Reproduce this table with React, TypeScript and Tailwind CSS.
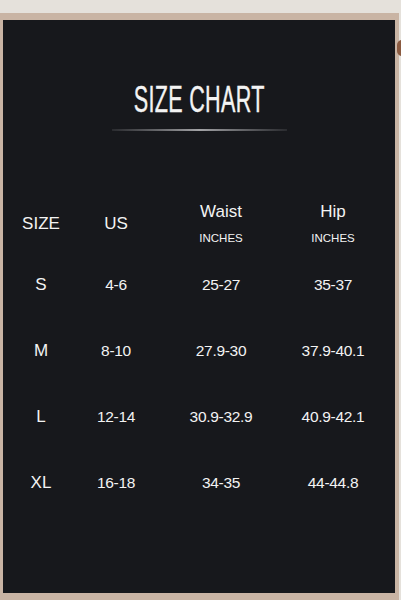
const rows = [
  ["S", "4-6", "25-27", "35-37"],
  ["M", "8-10", "27.9-30", "37.9-40.1"],
  ["L", "12-14", "30.9-32.9", "40.9-42.1"],
  ["XL", "16-18", "34-35", "44-44.8"],
];

const cols = "grid grid-cols-[76px_74px_136px_88px] items-center text-center";

export default function App() {
  return (
    <div className="relative w-[401px] h-[600px] overflow-hidden bg-[#e5e1db] pt-[13px] pr-[2px] font-['Liberation_Sans',Arial,sans-serif]">
      <div className="h-full bg-[#c9b4a4] pt-[7px] pl-[3px] pr-[4px]">
        <div className="h-[573px] bg-[#17181c] flex flex-col text-[#f3f3f3]">
          <div className="pt-[60px] h-[100px] flex justify-center">
            <span className="inline-block text-[36px] leading-[40px] scale-x-[0.6] tracking-[0.5px] [-webkit-text-stroke:0.4px_#f3f3f3]">
              SIZE CHART
            </span>
          </div>
          <div className="mx-auto mt-[9px] h-[2px] w-[175px] bg-gradient-to-r from-[#2a2b2f] via-[#a3a3a6] to-[#2a2b2f]" />

          <div className={`${cols} mt-[64px] h-[57px] text-[17px]`}>
            <div>SIZE</div>
            <div>US</div>
            <div className="flex flex-col items-center">
              <span className="leading-[20px]">Waist</span>
              <span className="mt-[9.5px] text-[11.5px] leading-[14px]">INCHES</span>
            </div>
            <div className="flex flex-col items-center">
              <span className="leading-[20px]">Hip</span>
              <span className="mt-[9.5px] text-[11.5px] leading-[14px]">INCHES</span>
            </div>
          </div>

          {rows.map((r) => (
            <div key={r[0]} className={`${cols} h-[66px] text-[15.5px] tracking-[-0.3px]`}>
              <div className="text-[17px] tracking-normal">{r[0]}</div>
              <div>{r[1]}</div>
              <div>{r[2]}</div>
              <div>{r[3]}</div>
            </div>
          ))}
        </div>
      </div>
      <div className="absolute right-[-6px] top-[40px] w-[10px] h-[16px] rounded-full bg-[#8a5a40]" />
    </div>
  );
}
